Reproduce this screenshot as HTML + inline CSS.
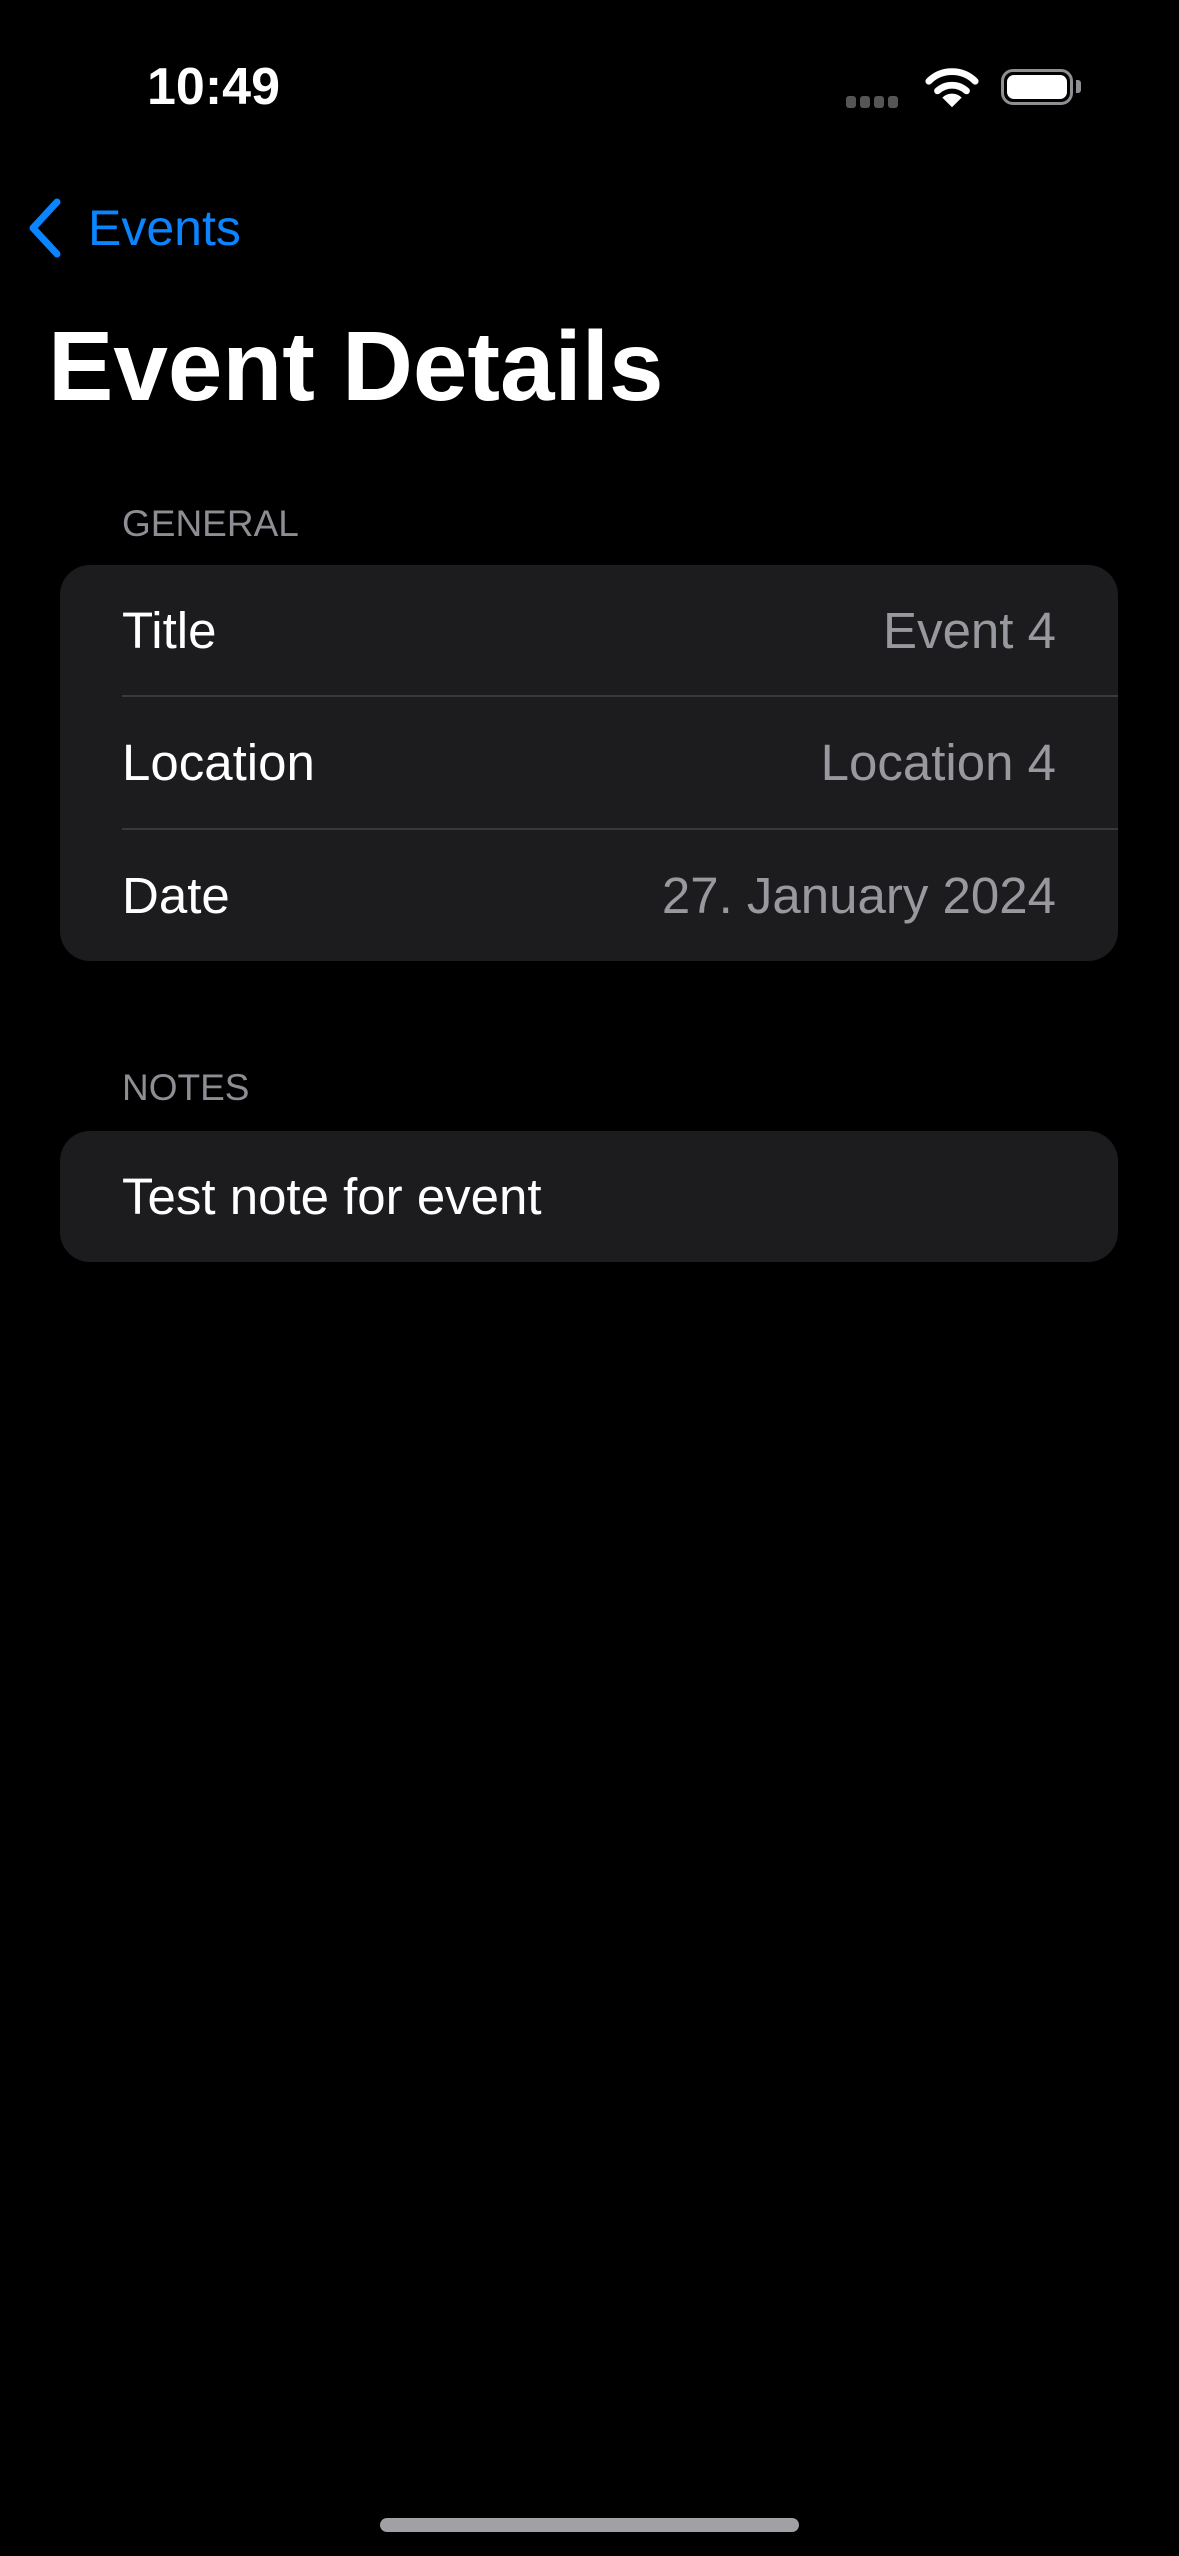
<!DOCTYPE html>
<html><head><meta charset="utf-8"><style>
*{margin:0;padding:0;box-sizing:border-box}
body{width:1179px;height:2556px;background:#000;font-family:"Liberation Sans",sans-serif;color:#fff;position:relative;overflow:hidden}
.a{position:absolute;white-space:nowrap}
.card{position:absolute;left:60px;width:1058px;background:#1c1c1e;border-radius:30px}
.row{position:absolute;left:0;right:0;height:131px}
.row .l{position:absolute;left:62px;top:0;line-height:131px;font-size:51px}
.row .r{position:absolute;right:62px;top:0;line-height:131px;font-size:51px;color:#98989f}
.sep{position:absolute;left:62px;right:0;height:2px;background:#38383a}
.hdr{font-size:37px;color:#8d8d93}
</style></head><body>
<div class="a" style="left:147px;top:57px;font-size:52px;font-weight:bold;line-height:60px">10:49</div>
<div class="a" style="left:846px;top:95px">
<span style="display:inline-block;width:10px;height:12px;background:#555;border-radius:3px;margin-right:4px"></span><span style="display:inline-block;width:10px;height:12px;background:#555;border-radius:3px;margin-right:4px"></span><span style="display:inline-block;width:10px;height:12px;background:#555;border-radius:3px;margin-right:4px"></span><span style="display:inline-block;width:10px;height:12px;background:#555;border-radius:3px"></span></div>
<svg class="a" style="left:924px;top:66px" width="56" height="44" viewBox="0 0 58 42"><path d="M5 14 A34 34 0 0 1 53 14" stroke="#fff" stroke-width="7" fill="none" stroke-linecap="round"/><path d="M14 24 A22 22 0 0 1 44 24" stroke="#fff" stroke-width="7" fill="none" stroke-linecap="round"/><path d="M29 41 L19 31 A14 14 0 0 1 39 31 Z" fill="#fff"/></svg>
<div class="a" style="left:1001px;top:69px;width:72px;height:36px;border:3px solid #8e8e93;border-radius:12px;padding:3px"><div style="width:100%;height:100%;background:#fff;border-radius:7px"></div></div>
<div class="a" style="left:1076px;top:80px;width:5px;height:13px;background:#8e8e93;border-radius:0 3px 3px 0"></div>
<svg class="a" style="left:26px;top:198px" width="40" height="60" viewBox="0 0 40 60"><path d="M31 4 L7 30 L31 56" stroke="#0a84ff" stroke-width="7" fill="none" stroke-linecap="round" stroke-linejoin="round"/></svg>
<div class="a" style="left:88px;top:198px;font-size:50px;line-height:60px;color:#0a84ff">Events</div>
<div class="a" style="left:48px;top:306px;font-size:98px;font-weight:bold;line-height:120px">Event Details</div>
<div class="a hdr" style="left:122px;top:500px;line-height:48px">GENERAL</div>
<div class="card" style="top:565px;height:396px">
<div class="row" style="top:0"><span class="l">Title</span><span class="r">Event 4</span></div>
<div class="sep" style="top:130px"></div>
<div class="row" style="top:132px"><span class="l">Location</span><span class="r">Location 4</span></div>
<div class="sep" style="top:263px"></div>
<div class="row" style="top:265px"><span class="l">Date</span><span class="r">27. January 2024</span></div>
</div>
<div class="a hdr" style="left:122px;top:1064px;line-height:48px">NOTES</div>
<div class="card" style="top:1131px;height:131px">
<div class="row" style="top:0"><span class="l">Test note for event</span></div>
</div>
<div class="a" style="left:380px;top:2518px;width:419px;height:14px;background:#a0a0a5;border-radius:7px"></div>
</body></html>
